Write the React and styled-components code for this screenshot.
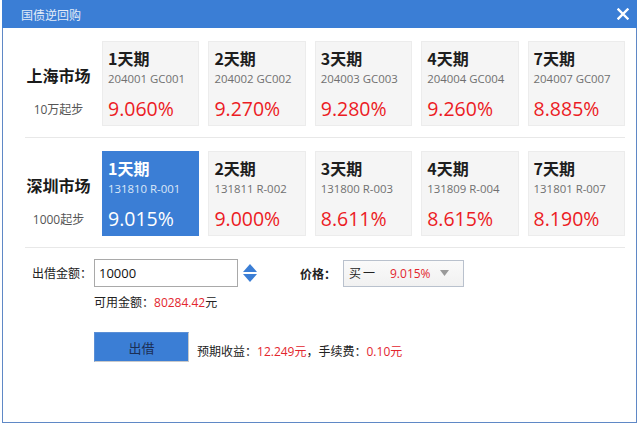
import React from "react";
import styled, { createGlobalStyle } from "styled-components";

const Global = createGlobalStyle`
  html, body { margin: 0; padding: 0; background: #fff; }
  body { font-family: "Open Sans", "Noto Sans CJK SC", sans-serif; color: #222; }
  * { box-sizing: border-box; }
`;

const Window = styled.div`
  margin-left: 2px;
  width: 635px;
  height: 423px;
  border: 1px solid #5f88c6;
  border-top: none;
  background: #fff;
  display: flex;
  flex-direction: column;
`;

const TitleBar = styled.div`
  height: 28px;
  background: #3b7ed5;
  display: flex;
  align-items: center;
  justify-content: space-between;
  padding: 0 8px 0 19px;
  margin: 0 -1px;
`;

const Title = styled.span`
  color: #e3ecf8;
  font-size: 12px;
  font-family: "Noto Sans CJK SC", sans-serif;
`;

const Close = styled.svg`
  width: 12px;
  height: 12px;
`;

const Section = styled.div`
  margin: 0 11px 0 22px;
  padding: 13px 0 11px;
  border-bottom: 1px solid #e8e8e8;
  display: flex;
  gap: 10px;
`;

const MarketInfo = styled.div`
  width: 67px;
  display: flex;
  flex-direction: column;
  align-items: center;
  padding-top: 22px;
`;

const MarketName = styled.div`
  font-family: "Noto Sans CJK SC", sans-serif;
  font-weight: 700;
  font-size: 16px;
  line-height: 24px;
  color: #1a1a1a;
`;

const MarketMin = styled.div`
  margin-top: 15px;
  font-size: 12px;
  line-height: 16px;
  color: #555;
`;

const Cards = styled.div`
  flex: 1;
  display: grid;
  grid-template-columns: repeat(5, 1fr);
  gap: 9px;
`;

const Card = styled.div`
  height: 85px;
  padding: 6px 0 0 5px;
  background: ${(p) => (p.$active ? "#3b7ed5" : "#f5f5f5")};
  border: 1px solid ${(p) => (p.$active ? "#3b7ed5" : "#ececec")};
  display: flex;
  flex-direction: column;
`;

const Term = styled.div`
  font-family: "Noto Sans CJK SC", sans-serif;
  font-weight: 700;
  font-size: 16px;
  line-height: 20px;
  color: ${(p) => (p.$active ? "#fff" : "#1e1e1e")};
`;

const Code = styled.div`
  margin-top: 3px;
  font-size: 11.4px;
  line-height: 16px;
  color: ${(p) => (p.$active ? "#dbe7f8" : "#707070")};
`;

const Rate = styled.div`
  margin-top: 9px;
  font-size: 19.5px;
  line-height: 26px;
  color: ${(p) => (p.$active ? "#fff" : "#ec1b24")};
`;

const Form = styled.div`
  padding: 11px 0 0;
  display: flex;
  flex-direction: column;
`;

const FieldRow = styled.div`
  display: flex;
  align-items: center;
`;

const FieldLabel = styled.span`
  margin-left: 29px;
  width: 62px;
  font-size: 12px;
  color: #222;
`;

const AmountInput = styled.input`
  width: 144px;
  height: 28px;
  border: 1px solid #a9a9a9;
  padding: 0 4px;
  font-family: "Open Sans", sans-serif;
  font-size: 13px;
  color: #111;
  outline: none;
`;

const Spinner = styled.svg`
  margin-left: 5px;
  width: 14px;
  height: 19px;
`;

const PriceLabel = styled.span`
  margin-left: 43px;
  width: 43px;
  font-size: 12px;
  font-weight: 700;
  font-family: "Noto Sans CJK SC", sans-serif;
`;

const Select = styled.div`
  width: 121px;
  height: 27px;
  border: 1px solid #b9c1cd;
  background: linear-gradient(#fafafa, #f1f1f1);
  display: flex;
  align-items: center;
  padding-left: 5px;
  font-size: 12px;
`;

const SelectSide = styled.span`
  width: 41px;
  color: #222;
  letter-spacing: 2px;
`;

const SelectValue = styled.span`
  width: 50px;
  color: #e3262e;
`;

const Arrow = styled.svg`
  width: 9px;
  height: 6px;
`;

const Hint = styled.div`
  margin: 8px 0 0 91px;
  font-size: 12px;
  line-height: 16px;
  color: #222;
`;

const Red = styled.span`
  color: #e3262e;
`;

const ActionRow = styled.div`
  margin: 21px 0 0 91px;
  display: flex;
  align-items: center;
  gap: 8px;
`;

const LendButton = styled.button`
  width: 95px;
  height: 30px;
  background: #3b7ed5;
  border: 1px solid #5a8fd6;
  border-right-color: #c9c9c9;
  border-bottom-color: #c9c9c9;
  color: #1b2f55;
  font-family: "Noto Sans CJK SC", sans-serif;
  font-size: 13px;
  padding: 0;
`;

const Estimate = styled.div`
  margin-top: 10px;
  font-size: 12px;
  line-height: 16px;
  color: #222;
`;

const markets = [
  {
    name: "上海市场",
    min: "10万起步",
    items: [
      ["1天期", "204001 GC001", "9.060%"],
      ["2天期", "204002 GC002", "9.270%"],
      ["3天期", "204003 GC003", "9.280%"],
      ["4天期", "204004 GC004", "9.260%"],
      ["7天期", "204007 GC007", "8.885%"],
    ],
  },
  {
    name: "深圳市场",
    min: "1000起步",
    active: 0,
    items: [
      ["1天期", "131810 R-001", "9.015%"],
      ["2天期", "131811 R-002", "9.000%"],
      ["3天期", "131800 R-003", "8.611%"],
      ["4天期", "131809 R-004", "8.615%"],
      ["7天期", "131801 R-007", "8.190%"],
    ],
  },
];

export default function App() {
  return (
    <>
      <Global />
      <Window>
        <TitleBar>
          <Title>国债逆回购</Title>
          <Close viewBox="0 0 12 12">
            <path d="M1.5 1.5 L10.5 10.5 M10.5 1.5 L1.5 10.5" stroke="#fff" strokeWidth="2.4" strokeLinecap="square" />
          </Close>
        </TitleBar>
        {markets.map((m) => (
          <Section key={m.name}>
            <MarketInfo>
              <MarketName>{m.name}</MarketName>
              <MarketMin>{m.min}</MarketMin>
            </MarketInfo>
            <Cards>
              {m.items.map(([t, c, r], i) => {
                const a = m.active === i;
                return (
                  <Card key={c} $active={a}>
                    <Term $active={a}>{t}</Term>
                    <Code $active={a}>{c}</Code>
                    <Rate $active={a}>{r}</Rate>
                  </Card>
                );
              })}
            </Cards>
          </Section>
        ))}
        <Form>
          <FieldRow>
            <FieldLabel>出借金额：</FieldLabel>
            <AmountInput defaultValue="10000" />
            <Spinner viewBox="0 0 14 19">
              <path d="M0 8 L7 0 L14 8 Z" fill="#3b7ed5" />
              <path d="M0 10 L14 10 L7 18 Z" fill="#3b7ed5" />
            </Spinner>
            <PriceLabel>价格：</PriceLabel>
            <Select>
              <SelectSide>买一</SelectSide>
              <SelectValue>9.015%</SelectValue>
              <Arrow viewBox="0 0 9 6">
                <path d="M0 0 L9 0 L4.5 6 Z" fill="#9a9a9a" />
              </Arrow>
            </Select>
          </FieldRow>
          <Hint>
            可用金额：<Red>80284.42</Red>元
          </Hint>
          <ActionRow>
            <LendButton>出借</LendButton>
            <Estimate>
              预期收益：<Red>12.249元</Red>，手续费：<Red>0.10元</Red>
            </Estimate>
          </ActionRow>
        </Form>
      </Window>
    </>
  );
}
